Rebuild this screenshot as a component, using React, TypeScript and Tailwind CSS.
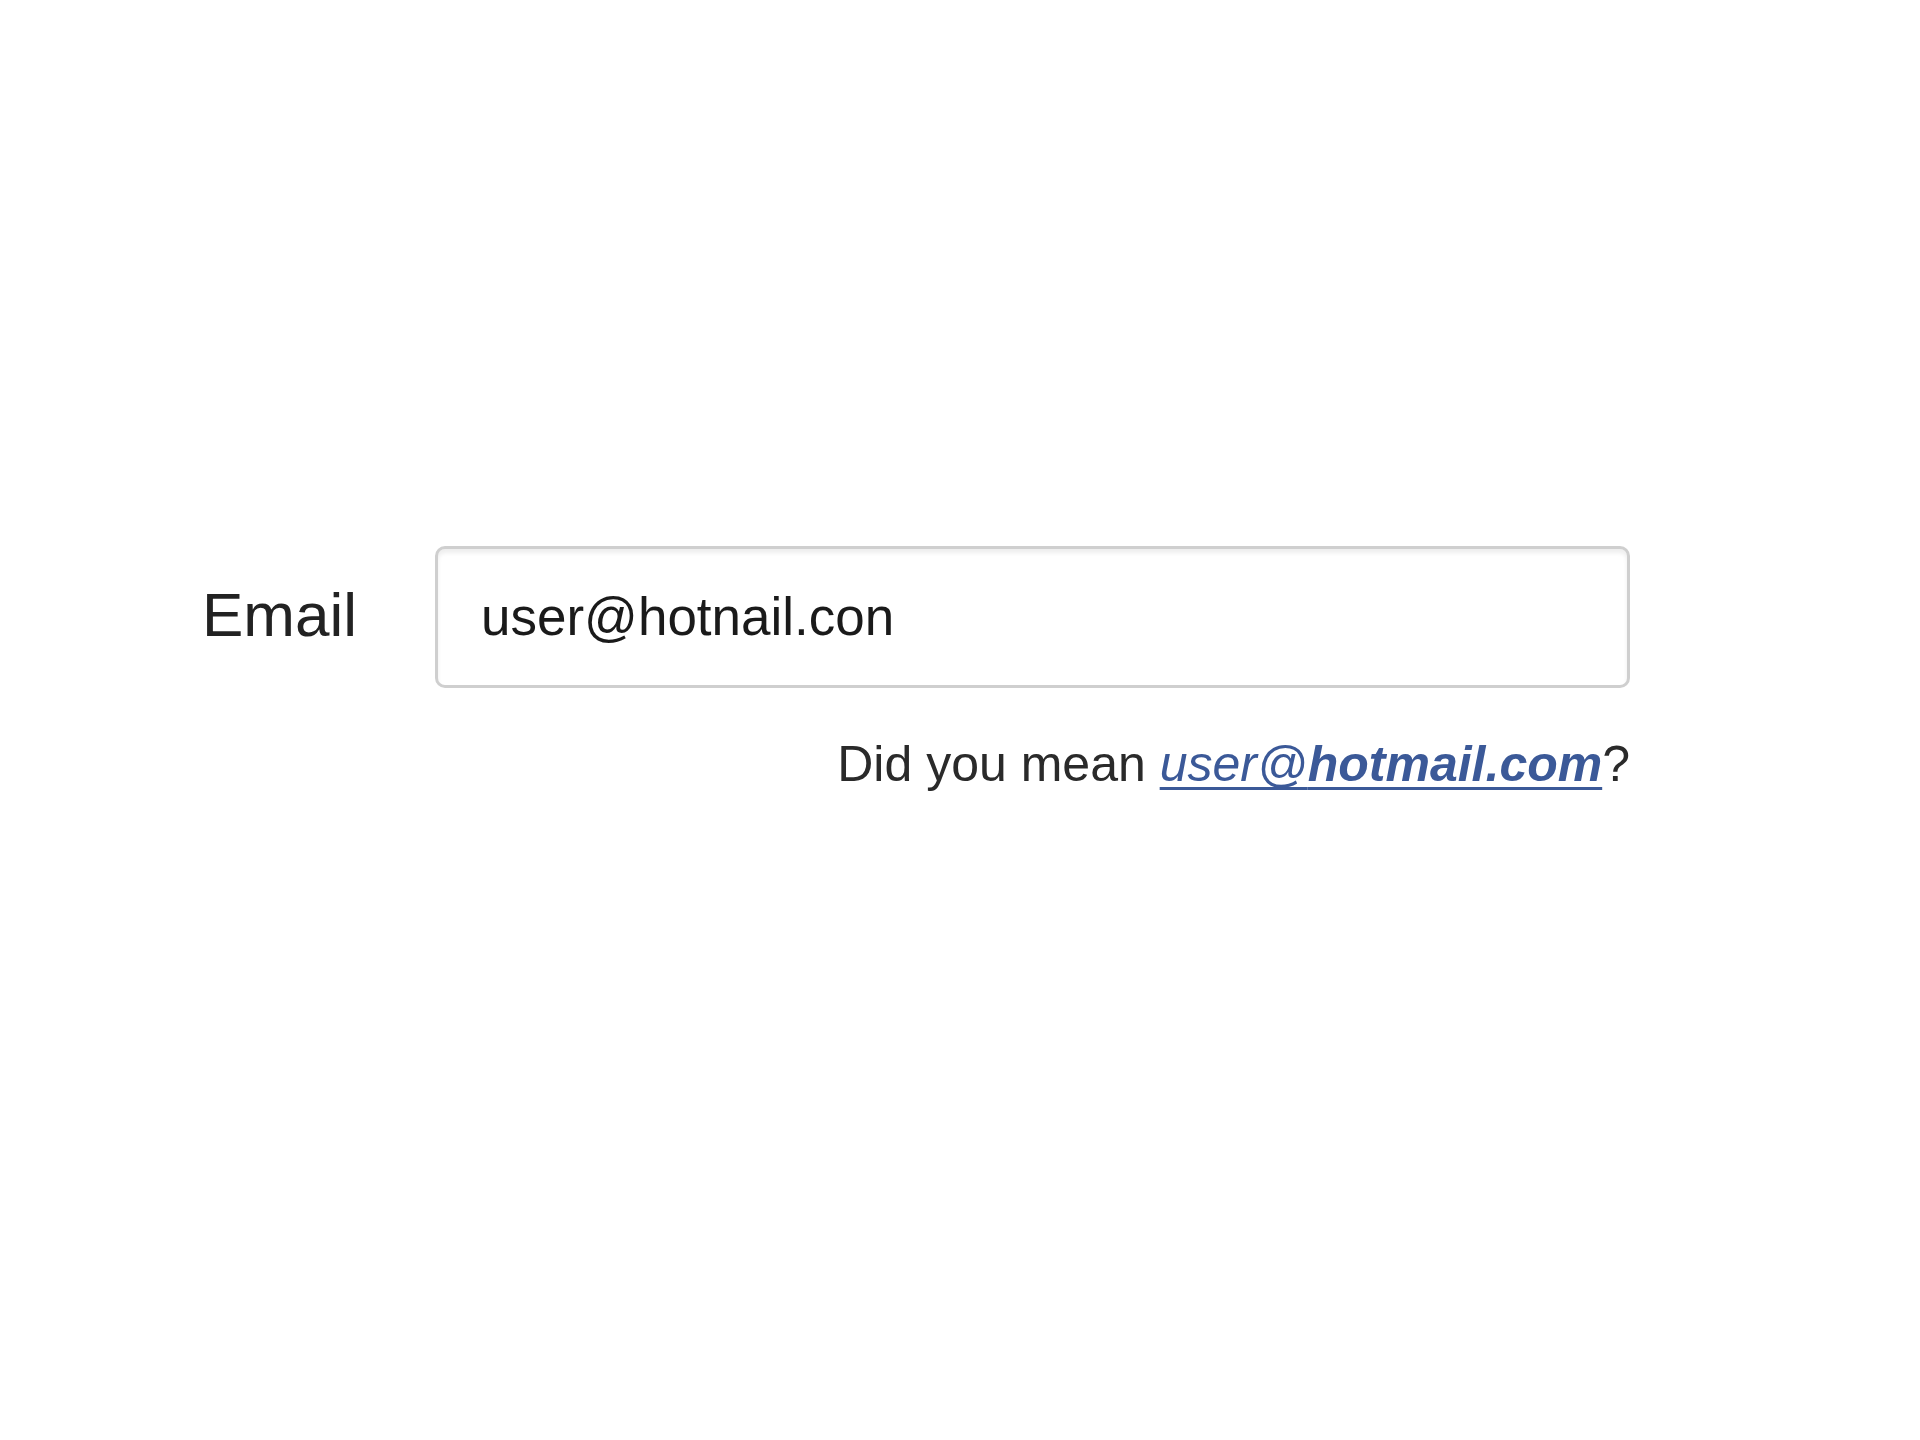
/**
 * EmailSuggest — email field with a "did you mean" correction hint.
 */

const FONT = { fontFamily: '"Liberation Sans", Arial, Helvetica, sans-serif' };

export default function App() {
  return (
    <div className="min-h-screen bg-white pt-[546px] pl-[202px] text-[#222]" style={FONT}>
      {/* Field row */}
      <div className="flex items-center">
        <label htmlFor="email" className="w-[233px] -mt-[4px] text-[62px] leading-none">
          Email
        </label>
        <input
          id="email"
          type="text"
          readOnly
          defaultValue="user@hotnail.con"
          className="w-[1195px] h-[142px] rounded-[10px] border-[3px] border-[#cfcfcf] bg-white pl-[43px] pb-[2px] text-[53px] text-[#1a1a1a] outline-none shadow-[inset_0_4px_4px_rgba(0,0,0,0.07)]"
          style={FONT}
        />
      </div>

      {/* Suggestion */}
      <div className="ml-[233px] mt-[48px] w-[1195px] text-right text-[50px] leading-[56px] text-[#2a2a2a]">
        Did you mean{' '}
        <a
          href="#"
          className="italic text-[#3b5998] underline decoration-[3px] underline-offset-[6px] [text-decoration-skip-ink:none]"
        >
          user@<span className="font-bold">hotmail.com</span>
        </a>
        ?
      </div>
    </div>
  );
}
